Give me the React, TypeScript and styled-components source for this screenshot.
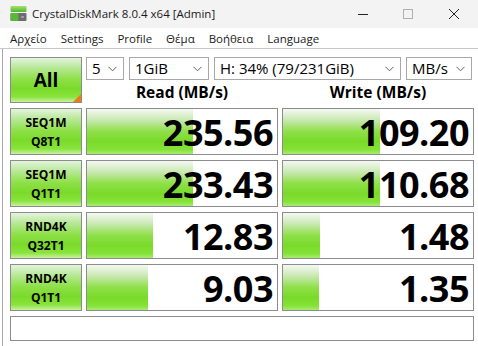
import React from "react";
import styled, { createGlobalStyle } from "styled-components";

const GlobalStyle = createGlobalStyle`
  html, body {
    margin: 0;
    padding: 0;
    background: #ffffff;
  }
  body {
    font-family: "Open Sans", "Noto Sans", "DejaVu Sans", sans-serif;
    color: #000;
  }
`;

type Result = { label: [string, string]; read: string; readBar: number; write: string; writeBar: number };

const results: Result[] = [
  { label: ["SEQ1M", "Q8T1"], read: "235.56", readBar: 106, write: "109.20", writeBar: 97 },
  { label: ["SEQ1M", "Q1T1"], read: "233.43", readBar: 106, write: "110.68", writeBar: 97 },
  { label: ["RND4K", "Q32T1"], read: "12.83", readBar: 66, write: "1.48", writeBar: 37 },
  { label: ["RND4K", "Q1T1"], read: "9.03", readBar: 61, write: "1.35", writeBar: 36 },
];

const menuItems = ["Αρχείο", "Settings", "Profile", "Θέμα", "Βοήθεια", "Language"];

const Chevron = () => (
  <svg width="9" height="6" viewBox="0 0 9 6">
    <path d="M0.5 0.8 L4.5 4.8 L8.5 0.8" fill="none" stroke="#606060" strokeWidth="1" />
  </svg>
);

const AppIcon = () => (
  <svg width="17" height="17" viewBox="0 0 17 17">
    <defs>
      <linearGradient id="g1" x1="0" y1="0" x2="0" y2="1">
        <stop offset="0" stopColor="#a8e070" />
        <stop offset="1" stopColor="#4cb82a" />
      </linearGradient>
    </defs>
    <rect x="0.5" y="1" width="16" height="6" rx="1" fill="url(#g1)" />
    <rect x="0.5" y="8" width="16" height="8" rx="1" fill="#6c6c6c" />
    <rect x="0.5" y="8" width="8" height="8" rx="1" fill="#58b83a" />
    <rect x="11" y="11" width="3" height="2" fill="#9a9a9a" />
  </svg>
);

const App = () => {
  return (
    <>
      <GlobalStyle />
      <Window>
        <TitleBar>
          <TitleLeft>
            <AppIcon />
            <TitleText>CrystalDiskMark 8.0.4 x64 [Admin]</TitleText>
          </TitleLeft>
          <Controls>
            <ControlButton>
              <svg width="12" height="12" viewBox="0 0 12 12">
                <path d="M1 6.5 H11" stroke="#222" strokeWidth="1" />
              </svg>
            </ControlButton>
            <ControlButton>
              <svg width="12" height="12" viewBox="0 0 12 12">
                <rect x="1.5" y="1.5" width="9" height="9" fill="none" stroke="#b0b0b0" strokeWidth="1" />
              </svg>
            </ControlButton>
            <ControlButton>
              <svg width="12" height="12" viewBox="0 0 12 12">
                <path d="M1 1 L11 11 M11 1 L1 11" stroke="#222" strokeWidth="1" />
              </svg>
            </ControlButton>
          </Controls>
        </TitleBar>
        <MenuBar>
          {menuItems.map((m) => (
            <MenuItem key={m}>{m}</MenuItem>
          ))}
        </MenuBar>
        <Main>
          <Grid>
            <AllButton>
              All
              <Corner />
            </AllButton>
            <TopRight>
              <Selectors>
                <Select $width={38}>
                  <span>5</span>
                  <Chevron />
                </Select>
                <Select $width={80}>
                  <span>1GiB</span>
                  <Chevron />
                </Select>
                <Select $width={187}>
                  <span>H: 34% (79/231GiB)</span>
                  <Chevron />
                </Select>
                <Select $width={66}>
                  <span>MB/s</span>
                  <Chevron />
                </Select>
              </Selectors>
              <Headers>
                <Header>Read (MB/s)</Header>
                <Header>Write (MB/s)</Header>
              </Headers>
            </TopRight>
            {results.map((r) => (
              <React.Fragment key={r.label.join()}>
                <TestButton>
                  <span>{r.label[0]}</span>
                  <span>{r.label[1]}</span>
                </TestButton>
                <Meter>
                  <Bar style={{ width: r.readBar }} />
                  <Value>{r.read}</Value>
                </Meter>
                <Meter>
                  <Bar style={{ width: r.writeBar }} />
                  <Value>{r.write}</Value>
                </Meter>
              </React.Fragment>
            ))}
            <Comment />
          </Grid>
        </Main>
      </Window>
    </>
  );
};

export default App;

const Window = styled.div`
  width: 478px;
  height: 346px;
  display: flex;
  flex-direction: column;
  overflow: hidden;
`;

const TitleBar = styled.div`
  flex-shrink: 0;
  height: 28px;
  display: flex;
  align-items: center;
  justify-content: space-between;
  background: #f3f3f3;
  padding-left: 10px;
`;

const TitleLeft = styled.div`
  display: flex;
  align-items: center;
  gap: 5px;
  margin-top: -1px;
`;

const TitleText = styled.span`
  font-size: 11.5px;
  color: #1a1a1a;
`;

const Controls = styled.div`
  display: flex;
  height: 100%;
`;

const ControlButton = styled.div`
  width: 45px;
  height: 100%;
  display: flex;
  align-items: center;
  justify-content: center;
  &:last-child {
    width: 48px;
  }
`;

const MenuBar = styled.div`
  flex-shrink: 0;
  height: 20px;
  display: flex;
  align-items: center;
  padding-left: 3px;
  background: #ffffff;
  border-bottom: 1px solid #c8c8c8;
`;

const MenuItem = styled.span`
  font-size: 11.5px;
  padding: 0 7px;
  color: #1a1a1a;
`;

const Main = styled.div`
  flex: 1;
  min-height: 0;
  background: #ffffff;
  border-left: 1px solid #a8a8a8;
  margin-left: 2px;
  padding: 8px 0 0 7px;
`;

const Grid = styled.div`
  display: grid;
  grid-template-columns: 72px 192px 192px;
  grid-template-rows: 46px repeat(4, 47px) 25px;
  column-gap: 4px;
  row-gap: 5px;
`;

const greenButton = `
  background: linear-gradient(
    to bottom,
    #e4f4dc 0%,
    #b8e898 22%,
    #8ee048 48%,
    #7ada2a 70%,
    #88e43a 88%,
    #c8f0a0 100%
  );
  border: 1px solid #8c8c8c;
  box-sizing: border-box;
`;

const AllButton = styled.div`
  ${greenButton}
  position: relative;
  display: flex;
  align-items: center;
  justify-content: center;
  font-weight: 700;
  font-size: 19px;
`;

const Corner = styled.div`
  position: absolute;
  right: 0;
  bottom: 0;
  width: 0;
  height: 0;
  border-left: 8px solid transparent;
  border-bottom: 8px solid #f07a1a;
`;

const TopRight = styled.div`
  grid-column: 2 / 4;
  display: flex;
  flex-direction: column;
`;

const Selectors = styled.div`
  display: flex;
  gap: 5px;
  height: 23px;
`;

const Select = styled.div<{ $width: number }>`
  width: ${(p) => p.$width}px;
  box-sizing: border-box;
  border: 1px solid #a8a8a8;
  background: #fff;
  display: flex;
  align-items: center;
  justify-content: space-between;
  padding: 0 6px 0 5px;
  font-size: 15px;
  white-space: nowrap;
  & > span {
    margin-top: -1px;
  }
`;

const Headers = styled.div`
  display: grid;
  grid-template-columns: 192px 192px;
  column-gap: 4px;
  flex: 1;
`;

const Header = styled.div`
  display: flex;
  align-items: center;
  justify-content: center;
  font-weight: 700;
  font-size: 15.5px;
  padding-top: 1px;
`;

const TestButton = styled.div`
  ${greenButton}
  display: flex;
  flex-direction: column;
  align-items: center;
  justify-content: center;
  font-weight: 700;
  font-size: 12px;
  line-height: 19px;
`;

const Meter = styled.div`
  position: relative;
  box-sizing: border-box;
  border: 1px solid #8c8c8c;
  background: #fff;
  display: flex;
  align-items: center;
  justify-content: flex-end;
`;

const Bar = styled.div`
  position: absolute;
  left: 0;
  top: 0;
  bottom: 0;
  background: linear-gradient(
    to bottom,
    #f4f8f2 0%,
    #c8e8b0 25%,
    #8ee048 50%,
    #7ada2a 72%,
    #84e236 90%,
    #a8ec70 100%
  );
`;

const Value = styled.span`
  position: relative;
  font-weight: 700;
  font-size: 36px;
  line-height: 40px;
  letter-spacing: -0.5px;
  padding-right: 4px;
  margin-top: 2px;
`;

const Comment = styled.div`
  grid-column: 1 / 4;
  box-sizing: border-box;
  border: 1px solid #8c8c8c;
  background: #fff;
`;
